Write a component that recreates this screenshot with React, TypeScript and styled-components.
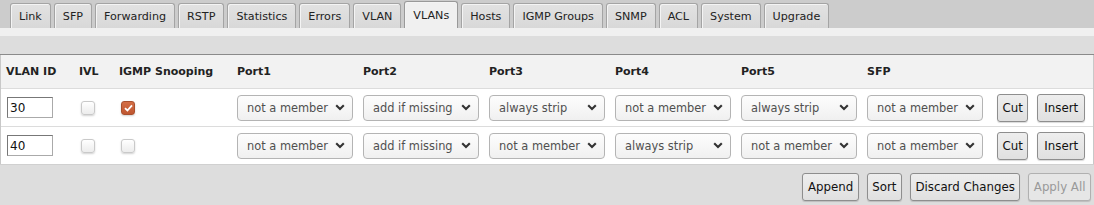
import React, { useState } from 'react';
import styled, { createGlobalStyle } from 'styled-components';

const GlobalStyle = createGlobalStyle`
  html, body {
    margin: 0;
    padding: 0;
    background: #cccccc;
    font-family: 'DejaVu Sans', Verdana, sans-serif;
    color: #222;
  }
`;

const tabs = ['Link', 'SFP', 'Forwarding', 'RSTP', 'Statistics', 'Errors', 'VLAN', 'VLANs', 'Hosts', 'IGMP Groups', 'SNMP', 'ACL', 'System', 'Upgrade'];
const ports = ['Port1', 'Port2', 'Port3', 'Port4', 'Port5', 'SFP'];
const modes = ['not a member', 'add if missing', 'always strip'];

const vlans = [
  { id: '30', ivl: false, igmp: true, ports: ['not a member', 'add if missing', 'always strip', 'not a member', 'always strip', 'not a member'] },
  { id: '40', ivl: false, igmp: false, ports: ['not a member', 'add if missing', 'not a member', 'always strip', 'not a member', 'not a member'] },
];

const Page = styled.div`
  width: 1094px;
  height: 205px;
  display: flex;
  flex-direction: column;
  overflow: hidden;
`;

const TabBar = styled.div`
  display: flex;
  align-items: flex-end;
  gap: 3px;
  height: 28px;
  padding-left: 10px;
  background: #cccccc;
`;

const Tab = styled.div<{ $active?: boolean }>`
  height: ${p => (p.$active ? '26px' : '24px')};
  padding: 0 8px;
  display: flex;
  align-items: center;
  font-size: 11.15px;
  color: #222;
  border: 1px solid ${p => (p.$active ? '#999' : '#a4a4a4')};
  border-bottom: none;
  border-radius: 3px 3px 0 0;
  background: ${p => (p.$active ? '#f0f0f0' : 'linear-gradient(#e2e2e2, #d8d8d8)')};
  box-shadow: inset 1px 1px 0 #f4f4f4;
  cursor: pointer;
`;

const Strip = styled.div`
  height: 8px;
  background: #f0f0f0;
`;

const Band = styled.div`
  height: 18px;
  background: #dddddd;
  border-bottom: 1px solid #8a8a8a;
`;

const Table = styled.div`
  display: grid;
  grid-template-columns: 73px 40px 118px repeat(6, 126px) 1fr;
  background: #ffffff;
  border-left: 1px solid #c8c8c8;
  border-right: 1px solid #c8c8c8;
`;

const HeadCell = styled.div`
  height: 33px;
  padding: 0 5px;
  display: flex;
  align-items: center;
  font-size: 11px;
  font-weight: bold;
  background: #f2f2f2;
  white-space: nowrap;
`;

const Cell = styled.div`
  height: 37px;
  padding: 0 5px;
  display: flex;
  align-items: center;
  gap: 9px;
  border-top: 1px solid #dcdcdc;
  box-sizing: content-box;
`;

const ActionCell = styled(Cell)`
  padding-left: 9px;
`;

const IdInput = styled.input`
  width: 40px;
  height: 17px;
  margin-left: 1px;
  padding: 1px 2px;
  font-family: 'DejaVu Sans', Verdana, sans-serif;
  font-size: 12px;
  border: 1px solid #777;
  border-right-color: #aaa;
  border-bottom-color: #aaa;
  background: #fff;
  color: #111;
  outline: none;
`;

const Check = styled.span<{ $on?: boolean }>`
  width: 12px;
  height: 12px;
  margin-left: 2px;
  border-radius: 3px;
  border: 1px solid ${p => (p.$on ? '#a8502e' : '#c9c9c9')};
  background: ${p => (p.$on ? 'linear-gradient(#d46e45, #bf5630)' : 'linear-gradient(#ffffff, #ececec)')};
  box-shadow: 0 1px 2px rgba(0, 0, 0, 0.18);
  display: flex;
  align-items: center;
  justify-content: center;
  cursor: pointer;
`;

const SelectWrap = styled.div`
  position: relative;
  width: 116px;
  height: 26px;
`;

const Select = styled.select`
  appearance: none;
  width: 100%;
  height: 100%;
  padding: 0 20px 0 9px;
  font-family: 'DejaVu Sans', Verdana, sans-serif;
  font-size: 11.4px;
  color: #505050;
  border: 1px solid #b4b4b4;
  border-radius: 4px;
  background: linear-gradient(#fdfdfd, #f0f0f0);
  outline: none;
`;

const Chevron = styled.svg`
  position: absolute;
  right: 8px;
  top: 9px;
  pointer-events: none;
`;

const Button = styled.button<{ $disabled?: boolean }>`
  height: 28px;
  padding: 0 4.5px;
  font-family: 'DejaVu Sans', Verdana, sans-serif;
  font-size: 11.8px;
  color: ${p => (p.$disabled ? '#999' : '#111')};
  border: 1px solid ${p => (p.$disabled ? '#b0b0b0' : '#8e8e8e')};
  border-radius: 3px;
  background: ${p => (p.$disabled ? '#e6e6e6' : 'linear-gradient(#eeeeee, #e0e0e0)')};
  box-shadow: 0 1px 1px rgba(0, 0, 0, 0.15);
  cursor: pointer;
`;

const InsertButton = styled(Button)`
  padding: 0 6px;
`;

const Footer = styled.div`
  flex: 1;
  display: flex;
  justify-content: flex-end;
  align-items: flex-start;
  gap: 8px;
  padding: 8px 3px 0 0;
  background: #dddddd;
  border-top: 1px solid #d0d0d0;
`;

function ChevronIcon() {
  return (
    <Chevron width="10" height="7" viewBox="0 0 10 7">
      <polyline points="1.2,1.2 5,5 8.8,1.2" fill="none" stroke="#333" strokeWidth="2.1" />
    </Chevron>
  );
}

function PortSelect({ value }: { value: string }) {
  const [v, setV] = useState(value);
  return (
    <SelectWrap>
      <Select value={v} onChange={e => setV(e.target.value)}>
        {modes.map(m => (
          <option key={m}>{m}</option>
        ))}
      </Select>
      <ChevronIcon />
    </SelectWrap>
  );
}

export default function App() {
  return (
    <>
      <GlobalStyle />
      <Page>
        <TabBar>
          {tabs.map(t => (
            <Tab key={t} $active={t === 'VLANs'}>
              {t}
            </Tab>
          ))}
        </TabBar>
        <Strip />
        <Band />
        <Table>
          <HeadCell>VLAN ID</HeadCell>
          <HeadCell>IVL</HeadCell>
          <HeadCell>IGMP Snooping</HeadCell>
          {ports.map(p => (
            <HeadCell key={p}>{p}</HeadCell>
          ))}
          <HeadCell />
          {vlans.map(row => (
            <React.Fragment key={row.id}>
              <Cell>
                <IdInput defaultValue={row.id} />
              </Cell>
              <Cell>
                <Check $on={row.ivl} />
              </Cell>
              <Cell>
                <Check $on={row.igmp}>
                  {row.igmp && (
                    <svg width="9" height="8" viewBox="0 0 9 8">
                      <polyline points="1,4.2 3.4,6.5 8,1.3" fill="none" stroke="#fff" strokeWidth="1.8" />
                    </svg>
                  )}
                </Check>
              </Cell>
              {row.ports.map((p, i) => (
                <Cell key={i}>
                  <PortSelect value={p} />
                </Cell>
              ))}
              <ActionCell>
                <Button>Cut</Button>
                <InsertButton>Insert</InsertButton>
              </ActionCell>
            </React.Fragment>
          ))}
        </Table>
        <Footer>
          <Button>Append</Button>
          <Button>Sort</Button>
          <Button>Discard Changes</Button>
          <Button $disabled>Apply All</Button>
        </Footer>
      </Page>
    </>
  );
}
